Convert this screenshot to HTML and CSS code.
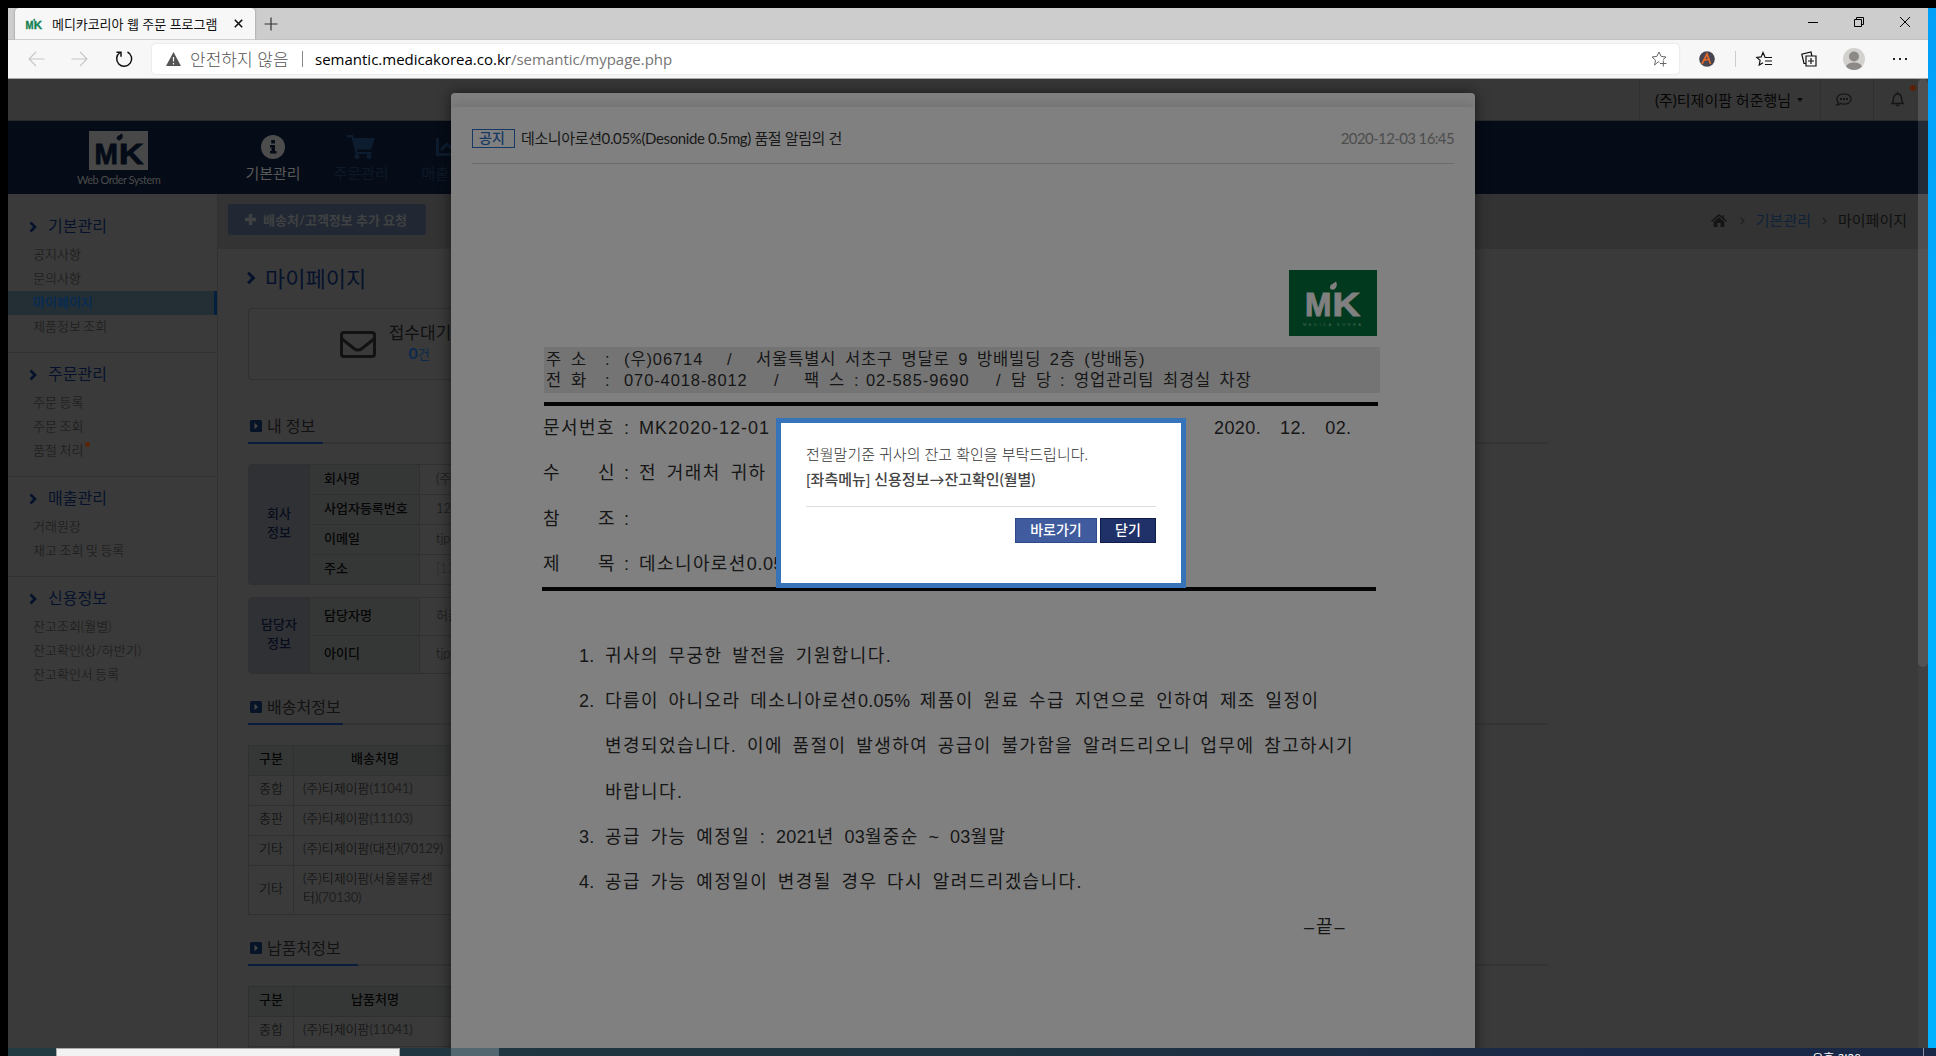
FILE: index.html
```html
<!DOCTYPE html>
<html lang="ko">
<head>
<meta charset="utf-8">
<title>메디카코리아 웹 주문 프로그램</title>
<link rel="stylesheet" href="styles.css">
</head>
<body>
<svg class="defs" width="0" height="0">
  <symbol id="mk" viewBox="0 0 60 40">
    <text x="5.500" y="33.500" font-size="31" textLength="24" lengthAdjust="spacingAndGlyphs">M</text>
    <text x="30.500" y="33.500" font-size="31" textLength="25" lengthAdjust="spacingAndGlyphs">K</text>
    <path d="M33.500 3c.8 2.500 .3 6-2.800 6.200-3 0-2.700-3.500 .2-4.500z"/>
  </symbol>
  <symbol id="chev" viewBox="0 0 8 12"><path d="M1.500 1.500L6 6l-4.500 4.500" fill="none" stroke="currentColor" stroke-width="2.600"/></symbol>
  <symbol id="sq" viewBox="0 0 12 12"><rect width="12" height="12" rx="1.500" fill="#071427"/><path d="M4.500 2.800L8 6 4.500 9.200z" fill="#454545"/></symbol>
</svg>
<div class="desktop">
  <div class="window">
    <div class="tabstrip">
      <div class="tab">
        <svg class="favicon" width="18" height="14" viewBox="4 0 54 38"><use href="#mk" width="60" height="40"/></svg>
        <span class="tab-title">메디카코리아 웹 주문 프로그램</span>
        <svg width="9" height="9" viewBox="0 0 9 9"><path d="M.8.800l7.400 7.400M8.200.800L.8 8.200" stroke="#111" stroke-width="1.600"/></svg>
      </div>
      <svg class="newtab" width="14" height="14" viewBox="0 0 14 14"><path d="M7 .5v13M.5 7h13" stroke="#333" stroke-width="1.200"/></svg>
      <div class="winbtns">
        <svg width="10" height="10" viewBox="0 0 10 10"><path d="M0 5.500h10" stroke="#000"/></svg>
        <svg width="10" height="10" viewBox="0 0 10 10"><path d="M.5 2.500h7v7h-7zM2.500 2.500v-2h7v7h-2" fill="none" stroke="#000"/></svg>
        <svg width="10" height="10" viewBox="0 0 10 10"><path d="M0 0l10 10M10 0L0 10" stroke="#000"/></svg>
      </div>
    </div>
    <div class="toolbar">
      <svg class="nav-ic" width="17" height="16" viewBox="0 0 17 16"><path d="M16.500 8H1M8 1L1 8l7 7" fill="none" stroke="#c6c6c6" stroke-width="1.100"/></svg>
      <svg class="nav-ic" width="17" height="16" viewBox="0 0 17 16"><path d="M.5 8H16M9 1l7 7-7 7" fill="none" stroke="#c6c6c6" stroke-width="1.100"/></svg>
      <svg class="nav-ic" width="18" height="18" viewBox="0 0 18 18"><path d="M12.500 2A7.500 7.500 0 1 1 5 2.500M1.500 2.300H6v4.500" fill="none" stroke="#111" stroke-width="1.500"/></svg>
      <div class="omnibox">
        <svg width="15" height="14" viewBox="0 0 15 14"><path d="M7.500 0L15 14H0z" fill="#555"/><path d="M7.500 5v4.500M7.500 11v1.500" stroke="#fff" stroke-width="1.200"/></svg>
        <span class="insecure">안전하지 않음</span>
        <span class="sep"></span>
        <span class="url"><b>semantic.medicakorea.co.kr</b>/semantic/mypage.php</span>
        <svg class="star" width="16" height="16" viewBox="0 0 16 16"><path d="M8.500 11.200L7.200 10.800 3.600 14l.9-4.800L1 6l4.800-.6L8 1l2.200 4.400L15 6l-3 2.600M9 12.500h6.500M12.300 9.500v6" fill="none" stroke="#666"/></svg>
      </div>
      <div class="tools">
        <svg width="16" height="16" viewBox="0 0 16 16"><circle cx="8" cy="8" r="7.800" fill="#45444f"/><path d="M3 13L8 3l3.500 10M4.500 9.500L11 8" fill="none" stroke="#e2682c" stroke-width="1.700"/></svg>
        <i class="tsep"></i>
        <svg width="16" height="16" viewBox="0 0 16 16"><path d="M9 6L7 1.500 5.200 5.900.8 6.400l3.300 3L3.200 14 7 11.800M8.500 6.500H16M9 10h7M9 13.500h7" fill="none" stroke="#111" stroke-width="1.200"/></svg>
        <svg width="16" height="16" viewBox="0 0 16 16"><path d="M5 5h10v10H5zM10 7v6M7 10h6M5 12.500H3L.8 3.200 10 1l.9 4" fill="none" stroke="#111" stroke-width="1.200"/></svg>
        <svg width="22" height="22" viewBox="0 0 22 22"><circle cx="11" cy="11" r="11" fill="#d3d1ce"/><circle cx="11" cy="8.500" r="5" fill="#8c8986"/><path d="M3 18.500c2-5.500 14-5.500 16 0-4 4.500-12 4.500-16 0z" fill="#8c8986"/></svg>
        <svg width="14" height="4" viewBox="0 0 14 4"><path d="M0 1h2v2H0zM6 1h2v2H6zM12 1h2v2h-2z" fill="#222"/></svg>
      </div>
    </div>

    <div class="page">
      <div class="topbar">
        <div class="user">(주)티제이팜 허준행님 <i class="caret"></i></div>
        <div class="tcell chat"><svg width="16" height="13" viewBox="0 0 16 13"><path d="M8 .8c4 0 7.200 2.300 7.200 5.200S12 11.200 8 11.200c-1.300 0-2.400-.2-3.500-.7-.8.800-2 1.400-3.700 1.400.8-.8 1.400-1.800 1.500-2.700C1.300 8.300.8 7.200.8 6 .8 3.100 4 .8 8 .8z" fill="none" stroke="#151515" stroke-width="1.300"/><path d="M4 5h2v2H4zM7 5h2v2H7zM10 5h2v2h-2z" fill="#151515"/></svg></div>
        <div class="tcell bell"><svg width="13" height="15" viewBox="0 0 13 15"><path d="M1 11.500c1.300-1.500 1.500-2.500 1.500-5 0-6 8-6 8 0 0 2.500.2 3.500 1.500 5zM6.500 0v2M5 12.500c.3 1.800 2.700 1.800 3 0" fill="none" stroke="#151515" stroke-width="1.400"/></svg><i class="dot"></i></div>
      </div>
      <div class="navbar">
        <div class="brand">
          <svg width="59" height="39" viewBox="0 0 59 39"><rect width="59" height="39" fill="#484848"/><g fill="#050c17" stroke="#050c17"><use href="#mk" width="59" height="39"/></g></svg>
          <span>Web Order System</span>
        </div>
        <div class="nav on"><svg width="24" height="24" viewBox="0 0 24 24"><circle cx="12" cy="12" r="12" fill="#4c4c4c"/><path d="M10.200 5h3.800v3.500h-3.800zM9 10h5v6h1.500v2.500h-6.500V16h1.500v-3.500H9z" fill="#050c17"/></svg>기본관리</div>
        <div class="nav"><svg width="28" height="24" viewBox="0 0 28 24"><path d="M0 0h6l1 3h20.500l-3 11.500H10l.5 2.500h14v2H8.500L4.500 2.500H0z" fill="#0d1c2e"/><circle cx="10" cy="21.500" r="2.500" fill="#0d1c2e"/><circle cx="22" cy="21.500" r="2.500" fill="#0d1c2e"/></svg>주문관리</div>
        <div class="nav"><svg width="26" height="24" viewBox="0 0 26 24"><path d="M1.500 3v16.500H26M5 15l6-6 4 4 8-8" fill="none" stroke="#0d1c2e" stroke-width="3"/></svg>매출관리</div>
      </div>
      <div class="columns">
        <aside class="side">
          <section><h3><svg width="8" height="12"><use href="#chev"/></svg>기본관리</h3><ul><li>공지사항</li><li>문의사항</li><li class="active">마이페이지</li><li>제품정보 조회</li></ul></section>
          <section><h3><svg width="8" height="12"><use href="#chev"/></svg>주문관리</h3><ul><li>주문 등록</li><li>주문 조회</li><li>품절 처리<i class="sdot"></i></li></ul></section>
          <section><h3><svg width="8" height="12"><use href="#chev"/></svg>매출관리</h3><ul><li>거래원장</li><li>재고 조회 및 등록</li></ul></section>
          <section><h3><svg width="8" height="12"><use href="#chev"/></svg>신용정보</h3><ul><li>잔고조회(월별)</li><li>잔고확인(상/하반기)</li><li>잔고확인서 등록</li></ul></section>
        </aside>
        <main>
          <div class="subhead">
            <div class="add"><svg width="11" height="11" viewBox="0 0 11 11"><path d="M5.500 0v11M0 5.500h11" stroke="#404142" stroke-width="3.400"/></svg>배송처/고객정보 추가 요청</div>
            <div class="crumbs">
              <svg width="16" height="13" viewBox="0 0 16 13"><path d="M8 0l3.500 3V1H13v3.300L16 7l-1 1-7-6-7 6-1-1z" fill="#151515"/><path d="M8 3.200l5.300 4.600V13H9.600V9H6.400v4H2.700V7.800z" fill="#151515"/></svg>
              <svg class="cs first" width="5" height="8" viewBox="0 0 5 8"><path d="M.8.800L4 4 .8 7.200" fill="none" stroke="#202020" stroke-width="1.300"/></svg>
              <span class="lnk">기본관리</span>
              <svg class="cs" width="5" height="8" viewBox="0 0 5 8"><path d="M.8.800L4 4 .8 7.200" fill="none" stroke="#202020" stroke-width="1.300"/></svg>
              <span>마이페이지</span>
            </div>
          </div>
          <div class="content">
            <h1><svg width="10" height="14" viewBox="0 0 8 12"><use href="#chev"/></svg>마이페이지</h1>
            <div class="status">
              <svg width="36" height="27" viewBox="0 0 36 27"><rect x="1.500" y="1.500" width="33" height="24" rx="2.500" fill="none" stroke="#121212" stroke-width="3"/><path d="M2 8l12 9.500c3 2.300 5 2.300 8 0L34 8" fill="none" stroke="#121212" stroke-width="3"/></svg>
              <div class="st"><span>접수대기</span><span class="cnt"><b>0</b>건</span></div>
            </div>
            <h2 class="h-a"><span class="w1"><svg width="12" height="12"><use href="#sq"/></svg>내 정보</span></h2>
            <div class="info t4">
              <div class="grp">회사<br>정보</div>
              <dl><dt>회사명</dt><dd>(주)티제이팜</dd><dt>사업자등록번호</dt><dd>123-81</dd><dt>이메일</dt><dd>tjph</dd><dt>주소</dt><dd class="dim">[17</dd></dl>
            </div>
            <div class="info t2">
              <div class="grp">담당자<br>정보</div>
              <dl><dt>담당자명</dt><dd>허준행</dd><dt>아이디</dt><dd>tjph</dd></dl>
            </div>
            <h2 class="h-b"><span class="w2"><svg width="12" height="12"><use href="#sq"/></svg>배송처정보</span></h2>
            <div class="grid">
              <b>구분</b><b>배송처명</b>
              <span>종합</span><span>(주)티제이팜<em>(11041)</em></span>
              <span>총판</span><span>(주)티제이팜<em>(11103)</em></span>
              <span>기타</span><span>(주)티제이팜(대전)<em>(70129)</em></span>
              <span class="tall">기타</span><span class="tall">(주)티제이팜(서울물류센<br>터)<em>(70130)</em></span>
            </div>
            <h2 class="h-c"><span class="w3"><svg width="12" height="12"><use href="#sq"/></svg>납품처정보</span></h2>
            <div class="grid">
              <b>구분</b><b>납품처명</b>
              <span>종합</span><span>(주)티제이팜<em>(11041)</em></span>
              <span></span><span></span>
            </div>
          </div>
        </main>
      </div>

      <div class="modal">
        <div class="sheet">
          <div class="m-head"><span class="badge">공지</span><span class="m-title">데소니아로션0.05%(Desonide 0.5mg) 품절 알림의 건</span><time>2020-12-03 16:45</time></div>
          <div class="doc">
            <svg class="seal" width="88" height="66" viewBox="0 0 88 66"><rect width="88" height="66" fill="#00391d"/><g fill="#808080" stroke="#808080"><use href="#mk" x="10" y="9" width="66" height="44"/></g><text x="14" y="56" font-size="4" textLength="58" class="tiny">MEDICA KOREA</text></svg>
            <div class="addr">
              <div class="a1"><span>주</span><span>소</span><span>:</span><span>(우)06714</span><span>/</span><span>서울특별시 서초구 명달로 9 방배빌딩 2층 (방배동)</span></div>
              <div class="a2"><span>전</span><span>화</span><span>:</span><span>070-4018-8012</span><span>/</span><span>팩</span><span>스</span><span>:</span><span>02-585-9690</span><span>/</span><span>담</span><span>당</span><span>:</span><span>영업관리팀 최경실 차장</span></div>
            </div>
            <div class="rule"></div>
            <div class="meta">
              <div class="full"><span>문서번호</span><span>:</span><span><u class="no">MK2020-12-01</u></span><span class="dt"><i>2020.</i><i>12.</i><i>02.</i></span></div>
              <div><span>수</span><span>신</span><span>:</span><span>전 거래처 귀하</span></div>
              <div><span>참</span><span>조</span><span>:</span><span></span></div>
              <div><span>제</span><span>목</span><span>:</span><span>데소니아로션<u>0.05%</u></span></div>
            </div>
            <div class="rule r2"></div>
            <div class="body">
              <div><u>1.</u><p>귀사의 무궁한 발전을 기원합니다.</p></div>
              <div><u>2.</u><p>다름이 아니오라 데소니아로션<u>0.05%</u> 제품이 원료 수급 지연으로 인하여 제조 일정이<br>변경되었습니다. 이에 품절이 발생하여 공급이 불가함을 알려드리오니 업무에 참고하시기<br>바랍니다.</p></div>
              <div><u>3.</u><p>공급 가능 예정일 : <u>2021</u>년 <u>03</u>월중순 ~ <u>03</u>월말</p></div>
              <div><u>4.</u><p>공급 가능 예정일이 변경될 경우 다시 알려드리겠습니다.</p></div>
            </div>
            <div class="end">–끝–</div>
          </div>
        </div>
      </div>

      <div class="popup">
        <p>전월말기준 귀사의 잔고 확인을 부탁드립니다.</p>
        <p class="strong">[좌측메뉴] 신용정보→잔고확인(월별)</p>
        <div class="btns"><span class="go">바로가기</span><span class="close">닫기</span></div>
      </div>
      <div class="scroll"><div class="thumb"></div></div>
    </div>
  </div>
  <div class="edge"></div>
  <div class="taskbar"><div class="preview"></div><div class="lit"></div><div class="clock">오후 3:28</div><div class="show"></div></div>
</div>
</body>
</html>
```
FILE: styles.css
```css
* { box-sizing: border-box; margin: 0; padding: 0; }
body { width: 1936px; height: 1056px; overflow: hidden; background: #000; font-family: Lato, "Noto Sans CJK KR", sans-serif; }
svg { display: block; flex: none; overflow: visible; }
.defs { position: absolute; }
svg text { font-family: "Liberation Sans", sans-serif; font-weight: 700; }
svg .tiny { font-weight: 400; fill: #4d6a58; }
i, em { font-style: normal; }
u { text-decoration: none; }
.desktop { display: grid; grid-template: 1040px 8px / 1920px 8px; padding: 8px 0 0 8px; }
.edge { background: linear-gradient(#00a0f8, #00b2ff 50%); }

/* browser chrome */
.window { display: flex; flex-direction: column; overflow: hidden; }
.tabstrip { height: 32px; flex: none; display: flex; align-items: center; background: #cdcdcd; padding-left: 7px; border-bottom: 1px solid #c2c2c2; }
.tab { width: 240px; height: 32px; display: flex; align-items: center; padding: 0 12px 0 10px; background: #f7f7f7; border-radius: 4px 4px 0 0; box-shadow: 0 0 2px rgba(0,0,0,.4); clip-path: inset(0 -3px 0 -3px); }
.favicon { fill: #118050; stroke: #118050; }
.tab-title { font: 13px/20px "Noto Sans CJK KR", sans-serif; margin-left: 9px; flex: 1; white-space: nowrap; color: #111; letter-spacing: -.07px; }
.newtab { margin-left: 9px; }
.winbtns { margin-left: auto; display: flex; gap: 36px; padding-right: 18px; margin-top: -4px; }
.toolbar { height: 39px; flex: none; display: flex; align-items: center; background: #f7f7f7; border-bottom: 1px solid #aaa; padding-left: 20px; }
.nav-ic { margin-right: 26px; }
.nav-ic:nth-child(3) { margin: 0 19px 0 1px; }
.omnibox { width: 1527px; height: 30px; display: flex; align-items: center; background: #fff; border-radius: 4px; box-shadow: 0 0 2px rgba(0,0,0,.15); padding: 0 12px 0 14px; }
.insecure { font: 17px/24px "Noto Sans CJK KR", sans-serif; font-weight: 300; margin-left: 9px; color: #555; width: 102px; white-space: nowrap; }
.sep { width: 1px; height: 16px; background: #888; margin: 0 12px 0 10px; }
.url { font: 15px/22px "Open Sans", sans-serif; color: #757575; flex: 1; white-space: nowrap; }
.url b { font-weight: 400; color: #000; }
.tools { display: flex; align-items: center; flex: 1; padding-left: 20px; }
.tsep { width: 1px; height: 16px; background: #ccc; margin: 0 20px; }
.tools svg:nth-child(4) { margin-left: 29px; }
.tools svg:nth-child(5) { margin-left: 26px; }
.tools svg:nth-child(6) { margin-left: 28px; }

/* application page */
.page { flex: 1; position: relative; overflow: hidden; background: #3a3a3a; color: #101010; }
.topbar { height: 42px; display: flex; justify-content: flex-end; background: #373737; border-bottom: 1px solid #2b2b2b; }
.user { width: 181px; border-left: 1px solid #303030; padding-left: 15px; font-size: 15px; line-height: 40px; white-space: nowrap; color: #060606; display: flex; align-items: center; gap: 6px; }
.caret { border: 3.500px solid transparent; border-top: 4px solid #0b0b0b; border-bottom: 0; }
.tcell { width: 53px; border-left: 1px solid #303030; display: flex; align-items: center; padding-left: 15px; position: relative; }
.bell { width: 55px; padding-left: 17px; }
.dot { position: absolute; left: 36px; top: 6px; width: 6px; height: 6px; border-radius: 50%; background: #5a2006; }
.navbar { height: 73px; display: flex; background: #050c17; font-size: 15px; }
.brand { width: 221px; padding: 10px 0 0 81px; display: flex; flex-direction: column; }
.brand span { font: 11px/16px Lato, sans-serif; color: #4b4b4b; margin: 2px 0 0 -12px; width: 90px; white-space: nowrap; letter-spacing: -.5px; }
.nav { width: 88px; display: flex; flex-direction: column; align-items: center; padding-top: 14px; line-height: 26px; color: #0d1928; gap: 1px; }
.nav.on { color: #585858; }
.columns { display: flex; height: 860px; }
.side { width: 210px; flex: none; border-right: 1px solid #313131; background: #3a3a3a; }
.side section { padding: 7px 0 13px; border-bottom: 1px solid #323232; }
.side section:first-child { padding-top: 18px; }
.side section:last-child { border: 0; }
.side h3 { height: 28px; margin-bottom: 3px; display: flex; align-items: center; padding-left: 21px; gap: 11px; font-size: 16px; line-height: 26px; font-weight: 400; color: #06122c; }
.side h3 svg { margin-top: 1px; }
.side ul { list-style: none; }
.side li { height: 24px; line-height: 22px; padding-left: 25px; font-size: 13px; font-weight: 300; color: #161616; display: flex; word-spacing: -1px; }
.side li.active { background: #232e35; border-right: 3px solid #04203f; color: #052c55; font-weight: 500; }
.sdot { width: 5px; height: 5px; border-radius: 50%; background: #5a2406; margin: 3px 0 0 2px; }
main { flex: 1; }
.subhead { height: 55px; background: #333; display: flex; justify-content: space-between; padding: 10px 21px 0 10px; }
.add { width: 198px; height: 31px; background: #212833; border-radius: 3px; display: flex; align-items: center; gap: 7px; padding-left: 17px; font-size: 13px; font-weight: 700; line-height: 28px; color: #404142; white-space: nowrap; }
.crumbs { display: flex; align-items: center; height: 33px; font-size: 15px; line-height: 30px; color: #101010; }
.crumbs span { margin-top: -2px; }
.cs { margin: 0 11px; }
.cs.first { margin: 0 11px 0 13px; }
.lnk { color: #0f2238; }
.content { padding-left: 30px; width: 1330px; }
h1 { height: 59px; display: flex; align-items: center; gap: 9px; font-size: 22px; font-weight: 400; line-height: 53px; color: #06122c; margin-left: -2px; }
h1 svg { margin-top: -2px; }
.status { width: 1100px; height: 72px; border: 1px solid #303030; border-radius: 4px; display: flex; align-items: center; padding-left: 91px; gap: 12px; }
.st { display: flex; flex-direction: column; align-items: center; font-size: 17px; line-height: 20px; width: 64px; font-weight: 400; margin-top: -2px; }
.st span:first-child { white-space: nowrap; }
.cnt { color: #0b294d; font-size: 13px; margin-left: -2px; }
.cnt b { font-size: 16px; }
h2 { height: 31px; border-bottom: 2px solid #343434; font-size: 16px; line-height: 28px; font-weight: 400; color: #121212; }
h2 span { display: flex; align-items: center; height: 31px; gap: 5px; padding: 0 0 3px 2px; border-bottom: 2px solid #0a1c3b; }
.h-a { margin: 33px 0 20px; }
.h-b { margin: 20px 0 20px; }
.h-c { margin: 20px 0 20px; }
.w1 { width: 75px; } .w2 { width: 95px; } .w3 { width: 110px; }
.info { width: 1100px; display: flex; border: 1px solid #303030; border-radius: 4px; margin-bottom: 12px; font-size: 13px; overflow: hidden; }
.t4 { height: 121px; } .t2 { height: 77px; margin-bottom: 0; }
.grp { width: 60px; padding-bottom: 3px; display: flex; align-items: center; text-align: center; justify-content: center; line-height: 19px; background: #303135; color: #070d1c; font-weight: 500; }
dl { flex: 1; display: grid; grid-template-columns: 111px 1fr; }
dt, dd { border-bottom: 1px solid #303030; padding: 0 0 3px 16px; display: flex; align-items: center; line-height: 20px; }
dt { padding-left: 14px; background: #353736; border-right: 1px solid #303030; border-left: 1px solid #303030; font-weight: 500; color: #060606; }
dd { font-weight: 300; }
dt:nth-last-of-type(1), dd:nth-last-of-type(1) { border-bottom: 0; }
dd.dim { color: #252525; }
.grid { display: grid; grid-template-columns: 45px 163px; font-size: 13px; font-weight: 300; color: #080808; border-top: 1px solid #303030; border-left: 1px solid #303030; width: 208px; }
.grid > * { height: 30px; line-height: 25px; border-right: 1px solid #303030; border-bottom: 1px solid #303030; padding-left: 9px; white-space: nowrap; }
.grid > b { background: #353736; text-align: center; padding: 0; font-weight: 500; color: #060606; }
.grid > span:nth-child(odd) { padding: 0; text-align: center; }
.grid > .tall { height: 49px; line-height: 19px; padding-top: 3px; }
.grid > .tall:nth-child(odd) { line-height: 44px; }
.grid em { color: #202020; font-weight: 400; letter-spacing: -.25px; }

/* notice modal */
.modal { position: absolute; left: 443px; top: 14px; width: 1024px; height: 1100px; padding-top: 14px; background: #808080; border-radius: 4px; box-shadow: 0 0 14px rgba(0,0,0,.55); }
.sheet { height: 1086px; border-radius: 4px; box-shadow: 0 -2px 14px rgba(0,0,0,.15); background: #808080; padding: 0 21px; clip-path: inset(-14px 0 0 0); }
.m-head { height: 57px; border-bottom: 1px solid #6b6b6b; display: flex; align-items: center; padding-top: 6px; font-size: 15px; line-height: 20px; color: #181818; }
.badge { width: 43px; height: 19px; border: 1px solid #173862; color: #173862; font-weight: 500; font-size: 14px; line-height: 16px; text-align: center; margin-right: 6px; padding-right: 3px; }
.m-title { flex: 1; font-weight: 400; letter-spacing: -.37px; }
.m-head time { color: #4d4d4d; letter-spacing: -.62px; margin-top: -1px; }
.doc { padding: 106px 0 0 72px; font-family: "Liberation Sans", "Noto Sans CJK KR", sans-serif; color: #161616; }
.seal { margin-left: 745px; }
.addr { margin-top: 11px; width: 836px; height: 46px; background: #747474; font-size: 16.500px; line-height: 21px; letter-spacing: .9px; word-spacing: 3px; padding: 2px 0 0 2px; }
.addr > div { display: grid; white-space: nowrap; }
.a1 { grid-template-columns: 25px 34px 19px 103px 29px 1fr; }
.a2 { grid-template-columns: 25px 34px 19px 150px 30px 25px 25px 12px 130px 15px 25px 24px 14px 1fr; }
.rule { width: 834px; height: 4px; background: #050505; margin-top: 9px; }
.meta { font-size: 18px; line-height: 45.400px; letter-spacing: 1.400px; word-spacing: 3.500px; margin-left: -1px; height: 181px; }
.meta > div { display: grid; grid-template-columns: 55px 26px 15px 1fr; height: 45.400px; }
.meta > .full { grid-template-columns: 81px 15px 575px 1fr; }
.dt { display: flex; gap: 19px; }
u, .dt i { letter-spacing: .6px; }
.dt i { letter-spacing: .4px; }
u.no { letter-spacing: 1px; }
.r2 { margin: 0 0 0 -2px; }
.body { padding: 43px 0 0 35px; font-size: 18px; line-height: 45.200px; letter-spacing: 1.420px; word-spacing: 3.250px; }
.body > div { display: grid; grid-template-columns: 26px 1fr; white-space: nowrap; }
.body u { letter-spacing: .2px; }
.end { font-size: 18px; line-height: 45px; padding-left: 760px; letter-spacing: 2px; }

/* alert popup */
.popup { position: absolute; left: 768px; top: 339px; width: 410px; height: 170px; border: 5px solid #3673b8; background: #fff; padding: 19px 25px; font-size: 15px; line-height: 25px; font-weight: 300; color: #333; white-space: nowrap; }
.popup .strong { font-weight: 500; color: #444; }
.btns { margin-top: 14px; border-top: 1px solid #ddd; padding-top: 11px; display: flex; justify-content: flex-end; gap: 3px; font-size: 14px; line-height: 22px; text-align: center; color: #fff; font-weight: 500; }
.go { width: 82px; height: 25px; background: #405c9e; border: 1px solid #2f4a8b; }
.close { width: 56px; height: 25px; background: #20316a; border: 1px solid #101d4a; }
.scroll { position: absolute; right: 0; top: 0; width: 10px; height: 969px; background: rgba(255,255,255,.035); }
.thumb { height: 588px; border-radius: 5px; background: rgba(255,255,255,.1); }

/* taskbar */
.taskbar { grid-column: 1 / 3; height: 8px; display: flex; background: linear-gradient(90deg, #223a42, #1e3440 50%, #1a2848 85%); overflow: hidden; }
.preview { width: 344px; margin-left: 48px; background: #f2f2f2; border: 1px solid #aaa; border-bottom: 0; }
.lit { width: 48px; margin-left: 51px; background: #526770; }
.clock { margin-left: auto; font: 12px/16px "Noto Sans CJK KR", sans-serif; color: #fff; padding-top: 2px; margin-right: 62px; white-space: nowrap; }
.show { width: 1px; background: #8b93a5; margin-right: 12px; }
```
